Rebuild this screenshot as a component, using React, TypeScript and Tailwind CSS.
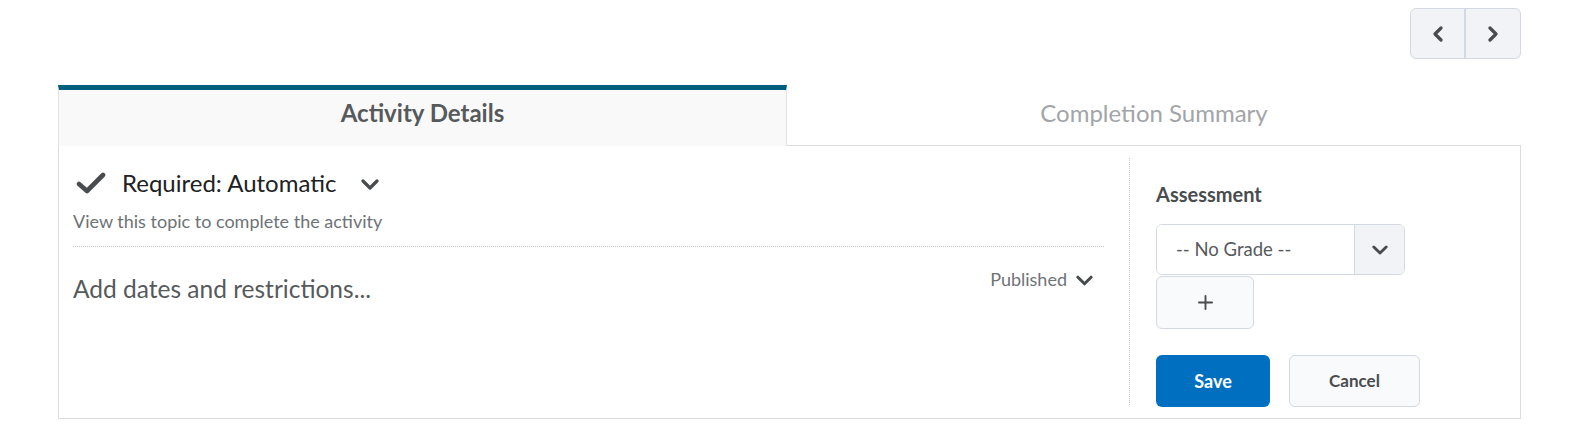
import React from "react";

const Chevron = ({ dir = "down", className = "" }: { dir?: "down" | "left" | "right"; className?: string }) => {
  const d =
    dir === "down" ? "M2 2 L9 9 L16 2" : dir === "left" ? "M8 2 L2 8 L8 14" : "M2 2 L8 8 L2 14";
  const box = dir === "down" ? "0 0 18 11" : "0 0 10 16";
  return (
    <svg viewBox={box} className={className} fill="none">
      <path d={d} stroke="currentColor" strokeWidth="3.2" strokeLinecap="round" strokeLinejoin="round" />
    </svg>
  );
};

export default function App() {
  return (
    <div className="w-full h-[429px] bg-white text-[#494c4e]" style={{ fontFamily: "Lato, 'Noto Sans', sans-serif" }}>
      {/* Prev / next */}
      <div className="flex justify-end pt-2 pr-[51px]">
        <div className="flex h-[51px] rounded-md border border-[#d3d9e3] bg-[#f1f3f6] overflow-hidden">
          <button className="w-[55px] flex items-center justify-center border-r-2 border-[#d3d9e3] text-[#494c4e]">
            <Chevron dir="left" className="w-[10px] h-[16px]" />
          </button>
          <button className="w-[54px] flex items-center justify-center text-[#494c4e]">
            <Chevron dir="right" className="w-[10px] h-[16px]" />
          </button>
        </div>
      </div>

      {/* Tabs */}
      <div className="mx-[58px] mr-[51px] mt-[26px]">
        <div className="flex">
          <div className="w-[729px] h-[61px] border-t-[5px] border-t-[#005f7f] border-l border-r border-[#e3e3e3] bg-[#f9f9f9] flex items-center justify-center pb-[10px]">
            <span className="text-[24px] leading-[30px] font-bold text-[#565a5c]">Activity Details</span>
          </div>
          <div className="flex-1 h-[61px] border-b border-[#dcdcdc] flex items-center justify-center pb-[10px] pt-[5px]">
            <span className="text-[24px] leading-[30px] text-[#a2a5a7]">Completion Summary</span>
          </div>
        </div>

        {/* Panel */}
        <div className="flex h-[273px] border-l border-r border-b border-[#dcdcdc]">
          <div className="ml-[14px] w-[1031px] pt-[22px]">
            <div className="flex items-center h-[30px]">
              <svg viewBox="0 0 30 22" className="w-[30px] h-[22px] ml-[3px] text-[#494c4e]" fill="none">
                <path d="M3 12 L11 19 L27 3" stroke="currentColor" strokeWidth="4.6" strokeLinecap="round" strokeLinejoin="round" />
              </svg>
              <span className="ml-[16px] text-[24px] leading-[30px] text-[#202122]">Required: Automatic</span>
              <Chevron dir="down" className="ml-[25px] w-[18px] h-[11px] text-[#494c4e] mt-[3px]" />
            </div>
            <div className="mt-[12px] text-[18px] text-[#6e7376] leading-[22px]">View this topic to complete the activity</div>
            <div className="mt-[14px] border-t border-dotted border-[#c8c8c8]" />
            <div className="flex justify-between items-start pt-[21px]">
              <span className="mt-[6px] text-[24.5px] text-[#565a5c] leading-[30px]">Add dates and restrictions...</span>
              <div className="flex items-center mr-[11px]">
                <span className="text-[18px] leading-[22px] text-[#6e7376]">Published</span>
                <Chevron dir="down" className="ml-[9px] w-[17px] h-[11px] text-[#494c4e] mt-[2px]" />
              </div>
            </div>
          </div>

          <div className="ml-[25px] mt-[12px] mb-[13px] border-l border-dotted border-[#c8c8c8]" />

          <div className="ml-[26px] flex-1 pt-[37px]">
            <div className="text-[20px] font-bold text-[#494c4e] leading-[22px]">Assessment</div>
            <div className="mt-[19px] flex w-[249px] h-[51px] rounded-md border border-[#d3d9e3] overflow-hidden">
              <div className="flex-1 flex items-center pl-[19px] text-[18.5px] text-[#565a5c] bg-white">-- No Grade --</div>
              <div className="w-[50px] flex items-center justify-center bg-[#f1f3f6] border-l border-[#d3d9e3]">
                <Chevron dir="down" className="w-[16px] h-[10px] text-[#494c4e]" />
              </div>
            </div>
            <button className="mt-[1px] w-[98px] h-[53px] rounded-md border border-[#d3d9e3] bg-[#f9fafb] flex items-center justify-center">
              <svg viewBox="0 0 16 16" className="w-[15px] h-[15px] text-[#494c4e]" fill="none">
                <path d="M8 1 V15 M1 8 H15" stroke="currentColor" strokeWidth="2" strokeLinecap="round" />
              </svg>
            </button>
            <div className="mt-[26px] flex gap-[19px]">
              <button className="w-[114px] h-[52px] rounded-md bg-[#006fbf] text-white text-[18px] font-bold">Save</button>
              <button className="w-[131px] h-[52px] rounded-md border border-[#d3d9e3] bg-[#f9fafb] text-[#494c4e] text-[17px] font-bold">Cancel</button>
            </div>
          </div>
        </div>
      </div>
    </div>
  );
}
